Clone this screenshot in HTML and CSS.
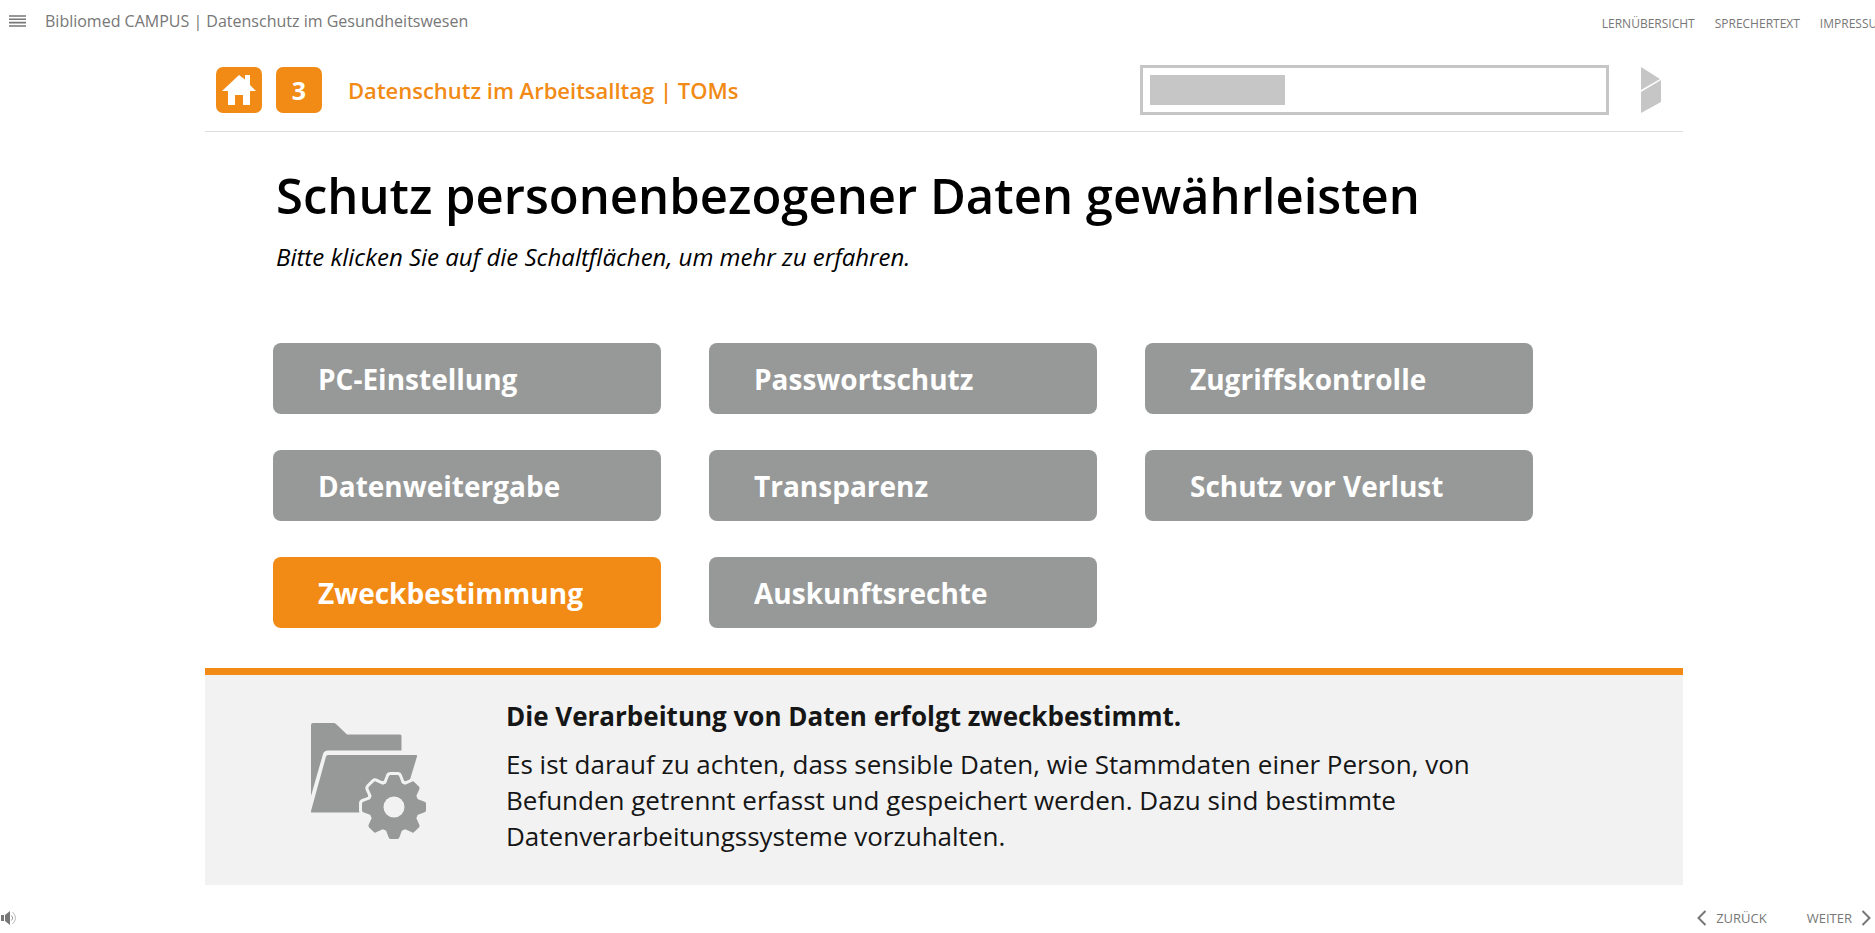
FILE: index.html
```html
<!DOCTYPE html>
<html lang="de">
<head>
  <meta charset="UTF-8">
  <meta name="viewport" content="width=device-width, initial-scale=1.0">
  <title>Bibliomed CAMPUS | Datenschutz im Gesundheitswesen</title>
  <link rel="stylesheet" href="styles.css">
</head>
<body>
  <header class="topbar">
    <button type="button" class="menu-btn" aria-label="Menü">
      <svg width="17" height="12" viewBox="0 0 17 12" fill="none" stroke="currentColor" stroke-width="1.6">
        <path d="M0 1h17M0 4.3h17M0 7.6h17M0 11h17"/>
      </svg>
    </button>
    <p class="course-title">Bibliomed CAMPUS | Datenschutz im Gesundheitswesen</p>
    <nav class="top-links">
      <a href="#">LERNÜBERSICHT</a>
      <a href="#">SPRECHERTEXT</a>
      <a href="#">IMPRESSUM</a>
    </nav>
  </header>

  <main class="stage">
    <div class="chapter">
      <a href="#" class="tile" aria-label="Startseite">
        <svg width="46" height="46" viewBox="0 0 46 46" fill="#fff">
          <path d="M23 8L6 24h6v14h7V28h8v10h7V24h6l-6-6V8h-5v4.500z"/>
        </svg>
      </a>
      <a href="#" class="tile">3</a>
      <h2>Datenschutz im Arbeitsalltag | TOMs</h2>
      <progress class="progress" value="30" max="100" aria-label="Fortschritt"></progress>
      <svg class="logo" width="20" height="46" viewBox="0 0 20 46" fill="#c6c6c6">
        <path d="M0 0l19 12L0 23z"/>
        <path d="M0 25l20-12v22L0 46z"/>
      </svg>
    </div>

    <section class="content">
      <h1>Schutz personenbezogener Daten gewährleisten</h1>
      <p class="hint">Bitte klicken Sie auf die Schaltflächen, um mehr zu erfahren.</p>

      <div class="topics">
        <button type="button">PC-Einstellung</button>
        <button type="button">Passwortschutz</button>
        <button type="button">Zugriffskontrolle</button>
        <button type="button">Datenweitergabe</button>
        <button type="button">Transparenz</button>
        <button type="button">Schutz vor Verlust</button>
        <button type="button" class="active">Zweckbestimmung</button>
        <button type="button">Auskunftsrechte</button>
      </div>
    </section>

    <section class="panel">
      <svg class="panel-icon" width="116" height="117" viewBox="0 0 116 117" fill="#979998">
        <path d="M2 0h21q1 0 2 1l11 10.500h53q1.500 0 1.500 1.500v14.500H17q-4 0-5 3.500L0 73V2q0-2 2-2z"/>
        <path d="M17 32h88q1.500 0 1 1.500L89 89.500H1q-1.500 0-1-1.500L15 33.500q.4-1.500 2-1.500z"/>
        <defs>
          <g id="gear">
            <circle cx="83" cy="84" r="25"/>
            <path id="teeth" d="M79.500 52h7q1.500 0 2 2l3 8v44l-3 8q-.5 2-2 2h-7q-1.500 0-2-2l-3-8V62l3-8q.5-2 2-2z"/>
            <use href="#teeth" transform="rotate(45 83 84)"/>
            <use href="#teeth" transform="rotate(90 83 84)"/>
            <use href="#teeth" transform="rotate(135 83 84)"/>
          </g>
        </defs>
        <use href="#gear" stroke="#f2f2f2" stroke-width="6" stroke-linejoin="round"/>
        <use href="#gear"/>
        <circle cx="83" cy="84" r="10.500" fill="#f2f2f2"/>
      </svg>
      <div class="panel-text">
        <h3>Die Verarbeitung von Daten erfolgt zweckbestimmt.</h3>
        <p>Es ist darauf zu achten, dass sensible Daten, wie Stammdaten einer Person, von Befunden getrennt erfasst und gespeichert werden. Dazu sind bestimmte Datenverarbeitungssysteme vorzuhalten.</p>
      </div>
    </section>
  </main>

  <footer class="bottombar">
    <button type="button" class="sound-btn" aria-label="Ton">
      <svg width="18" height="16" viewBox="0 0 18 16" fill="none">
        <path d="M1 5h3v6H1zM5 5l5-4v14l-5-4z" fill="#777"/>
        <path d="M11.500 5.500q2.500 2.500 0 5" stroke="#999"/>
        <path d="M12.500 2q6 6 0 12" stroke="#bbb"/>
      </svg>
    </button>
    <nav class="pager">
      <a href="#">
        <svg width="10" height="16" viewBox="0 0 10 16" fill="none" stroke="currentColor" stroke-width="2"><path d="M8.500 1L1.500 8l7 7"/></svg>
        ZURÜCK
      </a>
      <a href="#">
        WEITER
        <svg width="10" height="16" viewBox="0 0 10 16" fill="none" stroke="currentColor" stroke-width="2"><path d="M1.500 1l7 7-7 7"/></svg>
      </a>
    </nav>
  </footer>
</body>
</html>
```
FILE: styles.css
```css
* {
  box-sizing: border-box;
}

body {
  margin: 0;
  min-height: 100vh;
  display: flex;
  flex-direction: column;
  overflow-x: hidden;
  background: #fff;
  color: #000;
  font-family: "Trebuchet MS", "Open Sans", sans-serif;
}

h1, h2, h3, p {
  margin: 0;
}

a {
  text-decoration: none;
}

button {
  border: none;
  padding: 0;
  background: none;
  font-family: inherit;
  cursor: pointer;
}

svg {
  display: block;
  flex-shrink: 0;
}

/* top bar */
.topbar {
  display: flex;
  align-items: center;
  height: 41px;
  padding-left: 9px;
  color: #777;
  overflow: hidden;
}

.menu-btn {
  color: #777;
}

.course-title {
  margin-left: 19px;
  font-size: 16px;
  font-weight: 500;
  line-height: 24px;
  white-space: nowrap;
}

.top-links {
  display: flex;
  gap: 20px;
  margin-left: auto;
  margin-right: -13px;
  padding-top: 6px;
}

.top-links a,
.pager a {
  color: #777;
  font-size: 12px;
  font-weight: 500;
  line-height: 18px;
}

/* stage */
.stage {
  margin: 0 192px 0 205px;
}

.chapter {
  display: flex;
  align-items: center;
  height: 91px;
  padding: 8px 22px 0 11px;
  border-bottom: 1px solid #dedede;
}

.tile {
  display: flex;
  align-items: center;
  justify-content: center;
  width: 46px;
  height: 46px;
  margin-right: 14px;
  border-radius: 7px;
  background: #f28a16;
  color: #fff;
  font-size: 25px;
  font-weight: 700;
}

.chapter h2 {
  margin-left: 12px;
  color: #f28a16;
  font-size: 22px;
  font-weight: 600;
  line-height: 30px;
}

.progress {
  appearance: none;
  width: 469px;
  height: 50px;
  margin-left: auto;
  padding: 7px;
  border: 3px solid #c6c6c6;
  background: #fff;
}

.progress::-webkit-progress-bar {
  background: #fff;
}

.progress::-webkit-progress-value {
  background: #c6c6c6;
}

.logo {
  margin-left: 32px;
}

.content {
  padding: 31px 150px 40px 68px;
}

.content h1 {
  padding-left: 3px;
  font-size: 49px;
  font-weight: 600;
  line-height: 64px;
}

.hint {
  margin-top: 14px;
  padding-left: 3px;
  font-size: 24px;
  font-style: italic;
  line-height: 32px;
}

.topics {
  display: grid;
  grid-template-columns: repeat(3, 1fr);
  gap: 36px 48px;
  margin-top: 70px;
}

.topics button {
  height: 71px;
  padding-left: 45px;
  border-radius: 8px;
  background: #979998;
  color: #fff;
  font-size: 28px;
  font-weight: 700;
  text-align: left;
}

.topics button.active {
  background: #f28a16;
}

/* info panel */
.panel {
  display: flex;
  align-items: flex-start;
  min-height: 217px;
  padding: 23px 160px 24px 106px;
  border-top: 7px solid #f28a16;
  background: #f2f2f2;
  color: #161616;
}

.panel-icon {
  margin-top: 25px;
}

.panel-text {
  margin-left: 79px;
}

.panel h3 {
  font-size: 26px;
  font-weight: 700;
  line-height: 36px;
}

.panel p {
  margin-top: 12px;
  font-size: 26px;
  line-height: 36px;
}

/* bottom bar */
.bottombar {
  display: flex;
  align-items: center;
  justify-content: space-between;
  height: 30px;
  margin-top: auto;
  padding-right: 4px;
}

.pager {
  display: flex;
  gap: 40px;
}

.pager a {
  display: flex;
  align-items: center;
  gap: 9px;
  font-size: 13px;
}
```
